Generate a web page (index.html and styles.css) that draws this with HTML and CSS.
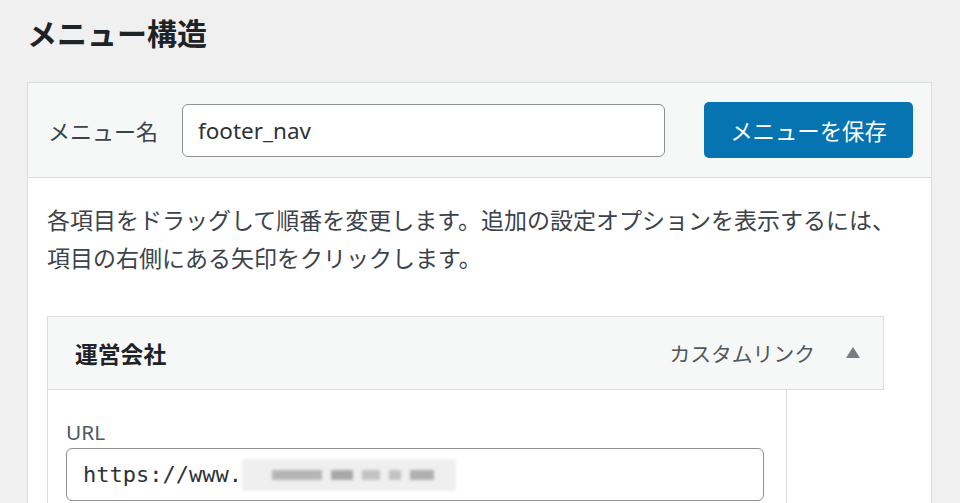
FILE: index.html
```html
<!DOCTYPE html>
<html lang="ja">
<head>
<meta charset="utf-8">
<title>メニュー構造</title>
<link rel="stylesheet" href="styles.css">
</head>
<body>
<h2 class="title">メニュー構造</h2>
<div class="menu-box">
  <div class="menu-head">
    <label class="name-label" for="menu-name">メニュー名</label>
    <input class="name-input" id="menu-name" type="text" value="footer_nav">
    <button class="save-btn" type="button">メニューを保存</button>
  </div>
  <div class="menu-body">
    <p class="desc">各項目をドラッグして順番を変更します。追加の設定オプションを表示するには、<br>項目の右側にある矢印をクリックします。</p>
    <div class="item">
      <div class="item-bar">
        <span class="item-title">運営会社</span>
        <span class="item-type">カスタムリンク</span>
        <svg class="item-arrow" width="14" height="11" viewBox="0 0 14 11"><polygon points="7,0 14,11 0,11" fill="#787c82"/></svg>
      </div>
      <div class="item-settings">
        <div class="field-label">URL</div>
        <div class="url-field"><span class="url-text">https://www.</span><span class="blur"><span class="b b1"></span><span class="b b2"></span><span class="b b3"></span><span class="b b4"></span><span class="b b5"></span></span></div>
      </div>
    </div>
  </div>
</div>
</body>
</html>
```
FILE: styles.css
```css
html, body {
  margin: 0;
  padding: 0;
  background: #f0f0f1;
  height: 503px;
  overflow: hidden;
  font-family: "Noto Sans", "Noto Sans CJK JP", sans-serif;
  color: #3c434a;
}
.title {
  margin: 0;
  padding: 12px 0 0 27px;
  height: 68px;
  box-sizing: border-box;
  font-size: 30px;
  line-height: 40px;
  font-weight: 700;
  color: #1d2327;
  font-family: "Noto Sans CJK JP", sans-serif;
}
.menu-box {
  margin-left: 27px;
  margin-top: 14px;
  width: 905px;
  box-sizing: border-box;
  border: 1px solid #dcdcde;
  background: #fff;
}
.menu-head {
  display: flex;
  align-items: center;
  height: 94px;
  padding: 0 18px 0 20px;
  background: #f6f7f7;
  border-bottom: 1px solid #dcdcde;
}
.name-label {
  font-family: "Noto Sans CJK JP", sans-serif;
  font-size: 22px;
  color: #3c434a;
  width: 134px;
}
.name-input {
  width: 483px;
  height: 53px;
  box-sizing: border-box;
  border: 1px solid #8c8f94;
  border-radius: 6px;
  padding: 0 15px;
  font-family: "Noto Sans", "Noto Sans CJK JP", sans-serif;
  font-size: 22.5px;
  color: #2c3338;
  background: #fff;
  outline: none;
}
.save-btn {
  margin-left: auto;
  width: 209px;
  height: 56px;
  border: 0;
  border-radius: 5px;
  background: #0574b0;
  color: #fff;
  font-family: "Noto Sans CJK JP", sans-serif;
  font-size: 22.4px;
  padding: 0;
}
.menu-body {
  padding: 22px 20px 40px 19px;
}
.desc {
  margin: 0 0 40px;
  font-family: "Noto Sans CJK JP", sans-serif;
  font-size: 23px;
  line-height: 38px;
  color: #3c434a;
  white-space: nowrap;
}
.item {
  width: 837px;
}
.item-bar {
  display: flex;
  align-items: center;
  height: 72px;
  padding: 0 23px 0 27px;
  background: #f6f7f7;
  border: 1px solid #dcdcde;
}
.item-title {
  font-family: "Noto Sans CJK JP", sans-serif;
  font-weight: 700;
  font-size: 22.8px;
  color: #1d2327;
}
.item-type {
  margin-left: auto;
  font-family: "Noto Sans CJK JP", sans-serif;
  font-size: 20.8px;
  color: #50575e;
}
.item-arrow {
  margin-left: 31px;
  margin-top: -2px;
}
.item-settings {
  width: 740px;
  box-sizing: border-box;
  border: 1px solid #dcdcde;
  border-top: 0;
  padding: 27px 22px 20px 18px;
}
.field-label {
  font-family: "Noto Sans", "Noto Sans CJK JP", sans-serif;
  font-size: 20.8px;
  line-height: 31px;
  color: #50575e;
}
.url-field {
  display: flex;
  align-items: center;
  height: 53px;
  box-sizing: border-box;
  border: 1px solid #8c8f94;
  border-radius: 6px;
  padding: 0 16px;
  background: #fff;
}
.url-text {
  font-family: "DejaVu Sans Mono", monospace;
  font-size: 22px;
  color: #2c3338;
}
.blur {
  display: flex;
  align-items: center;
  width: 214px;
  height: 32px;
  background: #efefef;
  filter: blur(1.5px);
  gap: 9px;
  padding-left: 30px;
  box-sizing: border-box;
}
.b {
  height: 10px;
  background: #c2c2c2;
}
.b1 { width: 50px; background: #b5b5b5; }
.b2 { width: 22px; background: #a8a8a8; }
.b3 { width: 18px; }
.b4 { width: 12px; }
.b5 { width: 24px; background: #b0b0b0; }
```
